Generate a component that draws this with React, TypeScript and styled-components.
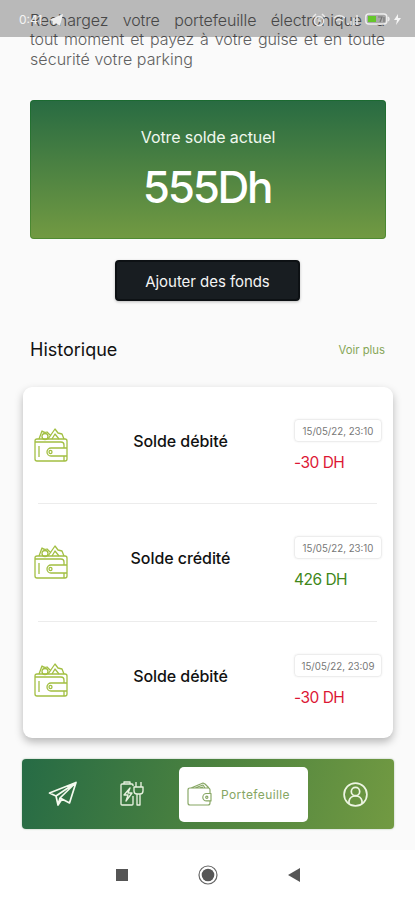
import React from "react";
import styled, { createGlobalStyle } from "styled-components";

const GlobalStyle = createGlobalStyle`
  * { box-sizing: border-box; }
  body { margin: 0; background: #fafafa; font-family: Inter, "Liberation Sans", sans-serif; }
  svg { display: block; }
`;

const Screen = styled.div`
  position: relative;
  width: 415px;
  height: 900px;
  display: flex;
  flex-direction: column;
  overflow: hidden;
  background: #fafafa;
`;

const StatusBar = styled.header`
  position: absolute;
  inset: 0 0 auto 0;
  height: 37px;
  padding: 2px 13px 0 19px;
  display: flex;
  align-items: center;
  justify-content: space-between;
  background: rgba(0, 0, 0, 0.26);
  color: #f4f4f4;
  font-size: 12px;
`;

const StatusGroup = styled.div`
  display: flex;
  align-items: center;
  gap: 7px;
`;

const Intro = styled.p`
  margin: 11px 30px 0;
  height: 89px;
  color: #606060;
  font-weight: 300;
  font-size: 16px;
  line-height: 19.4px;
`;

const IntroLine = styled.span<{ $fill?: boolean; $tracking: string }>`
  display: block;
  white-space: nowrap;
  letter-spacing: ${(p) => p.$tracking};
  text-align-last: ${(p) => (p.$fill ? "justify" : "left")};
`;

const BalanceCard = styled.section`
  height: 139px;
  margin: 0 29px 0 30px;
  padding-top: 27px;
  border-radius: 4px;
  display: flex;
  flex-direction: column;
  align-items: center;
  background: linear-gradient(180deg, #286b42, #729a42);
  box-shadow: inset 0 0 0 1px rgba(0, 105, 10, 0.3);
  color: #fff;
`;

const BalanceLabel = styled.div`
  font-size: 16px;
  line-height: 20px;
  color: #f0f8ef;
  letter-spacing: -0.1px;
`;

const BalanceAmount = styled.div`
  margin-top: 13px;
  font-size: 44px;
  font-weight: 500;
  line-height: 54px;
  letter-spacing: -2.3px;
  transform: translateX(-1px);
`;

const AddButton = styled.button`
  width: 185px;
  height: 41px;
  margin: 21px auto 0 115px;
  border: 2px solid #0d1114;
  border-radius: 4px;
  background: #181d21;
  color: #f4f4f4;
  font: 400 15px Inter, sans-serif;
  letter-spacing: -0.05px;
  padding-top: 3px;
  box-shadow: 0 1px 3px rgba(0, 0, 0, 0.25);
`;

const SectionHeader = styled.div`
  height: 24px;
  margin: 36px 30px 26px 30px;
  display: flex;
  align-items: center;
  justify-content: space-between;
`;

const SectionTitle = styled.h2`
  margin: 0;
  font-size: 18px;
  font-weight: 400;
  color: #111;
`;

const MoreLink = styled.span`
  padding-top: 2px;
  color: #86a657;
  font-size: 11.3px;
`;

const HistoryCard = styled.section`
  height: 351px;
  margin: 0 22px 0 23px;
  padding: 0 11px;
  border-radius: 9px;
  background: #fff;
  box-shadow: 0 4px 9px rgba(0, 0, 0, 0.27);
`;

const HistoryRow = styled.article`
  height: 117.4px;
  padding-top: 32px;
  display: grid;
  grid-template-columns: 34px 225px 1fr;
  align-items: start;
  background: linear-gradient(#ececec, #ececec) 4px 100% / 339px 1px no-repeat;
  &:last-child { background: none; }
`;

const WalletSlot = styled.div`
  padding-top: 8px;
`;

const Operation = styled.div`
  padding-top: 12px;
  text-align: center;
  font-size: 16px;
  line-height: 20px;
  font-weight: 500;
  letter-spacing: -0.07px;
  color: #111;
`;

const Details = styled.div`
  padding-left: 1px;
`;

const DateTag = styled.div`
  width: 88px;
  height: 23px;
  padding-top: 2px;
  border: 1px solid #ededed;
  border-radius: 4px;
  box-shadow: 0 0 2px rgba(0, 0, 0, 0.08);
  display: grid;
  place-items: center;
  color: #777;
  font-size: 9.7px;
  white-space: nowrap;
`;

const Amount = styled.div<{ $credit?: boolean }>`
  margin-top: 11px;
  font-size: 15.5px;
  line-height: 20px;
  letter-spacing: -0.5px;
  color: ${(p) => (p.$credit ? "#408719" : "#dc1735")};
`;

const TabBar = styled.nav`
  width: 372px;
  height: 70px;
  margin: 21px 0 21px 22px;
  padding: 0 26px;
  border-radius: 4px;
  display: flex;
  align-items: center;
  background: linear-gradient(105deg, #266b45, #4c823f 50%, #729a42);
  box-shadow: 0 0 2px rgba(40, 100, 40, 0.4);
`;

const TabItem = styled.div<{ $gap: number }>`
  margin-right: ${(p) => p.$gap}px;
`;

const ActiveTab = styled.div`
  width: 129px;
  height: 55px;
  margin-right: 35px;
  padding-left: 8px;
  border-radius: 5px;
  background: #fff;
  display: flex;
  align-items: center;
  gap: 9px;
  color: #86a663;
  font-size: 12px;
  letter-spacing: 0.4px;
`;

const SystemNav = styled.footer`
  height: 50px;
  display: flex;
  align-items: center;
  justify-content: center;
  gap: 69px;
  background: #fff;
`;

const Wallet = () => (
  <svg width="34" height="36" viewBox="0 0 34 36" fill="none" stroke="#a2bf42" strokeWidth="1.3" strokeLinejoin="round">
    <path d="M5 12 8 4q2 2 5 1l4 4M14 12 21 2l3 4 4 1 2 5M18 12l3-5 4 5" />
    <circle cx="11" cy="9.5" r="3" />
    <path d="M31 12H3q-2 0-2 2v18q0 2 2 2h28q2 0 2-2V14q0-2-2-2ZM1 15h26q3 0 3 3v3M33 21H17a4 4 0 0 0 0 8h16M30 29v5M5 19v11" />
    <ellipse cx="16.5" cy="25" rx="1.5" ry="1.7" />
  </svg>
);

const SmallWallet = () => (
  <svg width="25" height="26" viewBox="0 0 25 26" fill="none" stroke="#86a663" strokeWidth="1.15" strokeLinejoin="round">
    <path d="M23 12V9q0-2-2-2H3Q1 7 1 9v13q0 2 2 2h18q2 0 2-2v-2M4 7l12-5 2 1 4 4M8 7l8-3 2 3M12 7l4-1" />
    <path d="M24 12.5h-4.5a3.7 3.7 0 0 0 0 7.4H24Z" />
    <circle cx="19.8" cy="16.2" r="1.1" />
  </svg>
);

const Plane = () => (
  <svg width="30" height="26" viewBox="0 0 30 26" fill="none" stroke="#f4faef" strokeWidth="1.7" strokeLinejoin="round">
    <path d="M1.5 12 28 1.5 21.5 22 14 18 10 24 8 15ZM8 15 28 1.5 12 17 10 24M14 18l-2-1" />
  </svg>
);

const Charger = () => (
  <svg width="25" height="26" viewBox="0 0 25 26" fill="none" stroke="#e7f1df" strokeWidth="1.35" strokeLinejoin="round">
    <path d="M13 15v8q0 1-1 1H2q-1 0-1-1V4q0-1 1-1h2V1h6v2h2q1 0 1 1v1M4 3h6M10 7l-6 7h4l-2 6 6-8H8l2-5ZM16 1v5M21 1v5M14 6h9v4q0 3-3 3h-3q-3 0-3-3ZM17 13v11h3V13" />
  </svg>
);

const Profile = () => (
  <svg width="25" height="25" viewBox="0 0 25 25" fill="none" stroke="#edf5e2" strokeWidth="1.7">
    <circle cx="12.5" cy="12.5" r="11.4" />
    <circle cx="12.5" cy="9.5" r="4.2" />
    <path d="M6 21v-2q1-5 6.5-5t6.5 5v2" />
  </svg>
);

const StatusPlane = () => (
  <svg width="14" height="12" viewBox="0 0 14 12" fill="#eee">
    <path d="M0 6 14 0 11 12 7 9 4 11V7Z" />
  </svg>
);

const StatusSignals = () => (
  <svg width="46" height="14" viewBox="0 0 46 14" fill="none" stroke="#e8e8e8" strokeWidth="1.5">
    <circle cx="7" cy="8" r="4.5" />
    <path d="M7 5v3h2M1 4l3-3M10 1l3 3M22 5q5-5 11 0M24 8q3-3 7 0M27 10l1 1M36 12v-2M39 12V8M42 12V5M45 12V2" />
  </svg>
);

const Battery = () => (
  <svg width="37" height="13" viewBox="0 0 37 13">
    <rect x=".8" y="1" width="21" height="10" rx="3" fill="#aaa" stroke="#eee" strokeWidth="1.5" />
    <path d="M3 3h8v6H3z" fill="#65c72b" />
    <path d="M13 4h4l-2 5M19 4v5" fill="none" stroke="#777" strokeWidth="1.2" />
    <path d="M23 4q2 2 0 4" fill="none" stroke="#eee" strokeWidth="1.5" />
    <path d="m33 1-4 6h3l-1 5 5-7h-3z" fill="#f5f5f5" />
  </svg>
);

const operations = [
  { label: "Solde débité", date: "15/05/22, 23:10", amount: "-30 DH", credit: false },
  { label: "Solde crédité", date: "15/05/22, 23:10", amount: "426 DH", credit: true },
  { label: "Solde débité", date: "15/05/22, 23:09", amount: "-30 DH", credit: false },
];

export default function App() {
  return (
    <>
      <GlobalStyle />
      <Screen>
        <Intro>
          <IntroLine $fill $tracking="-0.1px">Rechargez votre portefeuille électronique à</IntroLine>
          <IntroLine $fill $tracking="-0.1px">tout moment et payez à votre guise et en toute</IntroLine>
          <IntroLine $tracking="0.05px">sécurité votre parking</IntroLine>
        </Intro>
        <StatusBar>
          <StatusGroup>
            <span>0:41</span>
            <StatusPlane />
          </StatusGroup>
          <StatusGroup>
            <StatusSignals />
            <Battery />
          </StatusGroup>
        </StatusBar>
        <BalanceCard>
          <BalanceLabel>Votre solde actuel</BalanceLabel>
          <BalanceAmount>555Dh</BalanceAmount>
        </BalanceCard>
        <AddButton>Ajouter des fonds</AddButton>
        <SectionHeader>
          <SectionTitle>Historique</SectionTitle>
          <MoreLink>Voir plus</MoreLink>
        </SectionHeader>
        <HistoryCard>
          {operations.map((op, i) => (
            <HistoryRow key={i}>
              <WalletSlot><Wallet /></WalletSlot>
              <Operation>{op.label}</Operation>
              <Details>
                <DateTag>{op.date}</DateTag>
                <Amount $credit={op.credit}>{op.amount}</Amount>
              </Details>
            </HistoryRow>
          ))}
        </HistoryCard>
        <TabBar>
          <TabItem $gap={42}><Plane /></TabItem>
          <TabItem $gap={34}><Charger /></TabItem>
          <ActiveTab>
            <SmallWallet />
            <span>Portefeuille</span>
          </ActiveTab>
          <TabItem $gap={0}><Profile /></TabItem>
        </TabBar>
        <SystemNav>
          <svg width="14" height="14" viewBox="0 0 14 14"><path d="M1 1h12v12H1z" fill="#555" /></svg>
          <svg width="20" height="20" viewBox="0 0 20 20">
            <circle cx="10" cy="10" r="9" fill="none" stroke="#666" strokeWidth="1.2" />
            <circle cx="10" cy="10" r="6.3" fill="#555" />
          </svg>
          <svg width="14" height="14" viewBox="0 0 14 14"><path d="M1 7 13 0v14z" fill="#555" /></svg>
        </SystemNav>
      </Screen>
    </>
  );
}
